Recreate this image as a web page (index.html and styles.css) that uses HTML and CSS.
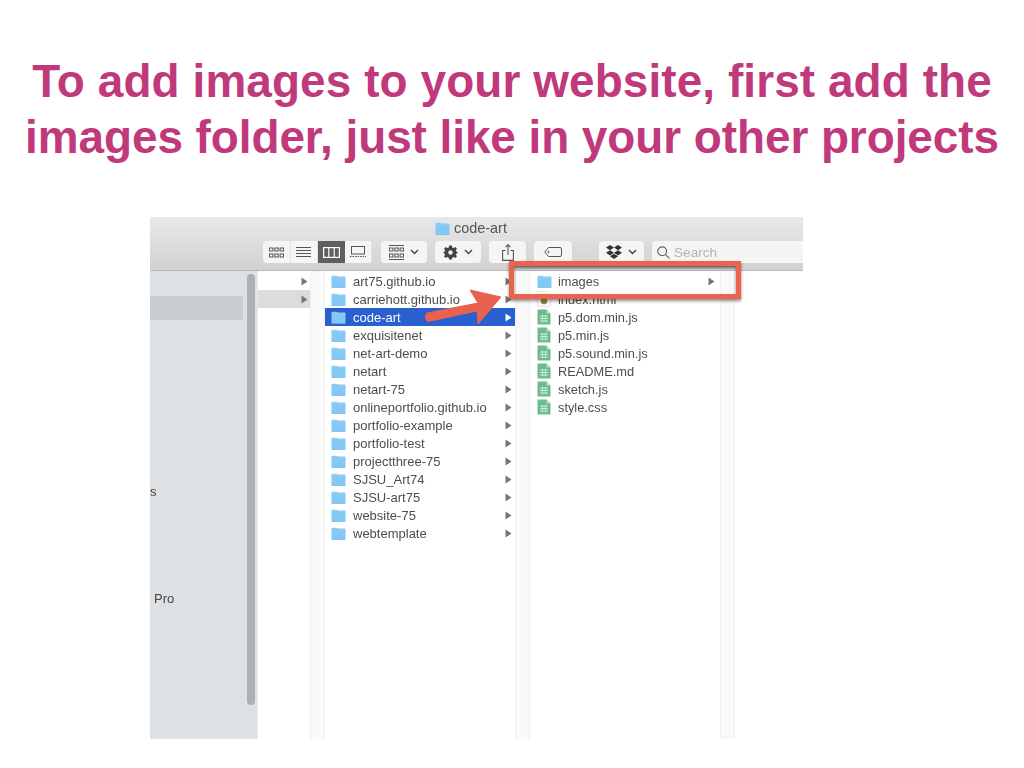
FILE: index.html

```html
<!DOCTYPE html>
<html lang="en">
<head>
  <meta charset="UTF-8" />
  <title>Add images folder</title>
  <link rel="stylesheet" href="styles.css">
</head>
<body>
  <svg class="defs" width="0" height="0">
    <symbol id="folder" viewBox="0 0 15 13">
      <path d="M0.5 2 Q0.5 0.7 2 0.7 H5.5 L6.5 1.6 H13.5 Q14.5 1.6 14.5 2.6 V11.5 Q14.5 12.5 13.5 12.5 H1.5 Q0.5 12.5 0.5 11.5 Z" fill="#84c8f6"/>
      <path d="M0.5 2.6 H14.5 V3.3 H0.5 Z" fill="#9bd3f8"/>
      <path d="M0.5 12 H14.5 V12.7 H0.5 Z" fill="#69b2e4"/>
    </symbol>
    <symbol id="jsfile" viewBox="0 0 14 16">
      <path d="M0.5 0.5 H9.5 L13.5 4.5 V15.5 H0.5 Z" fill="#6dbb8a"/>
      <path d="M9.5 0.5 L13.5 4.5 H9.5 Z" fill="#b7e0c5"/>
      <path d="M3 7 H11 M3 9.5 H11 M3 12 H11" stroke="#d8f0e0" stroke-width="0.9"/>
      <path d="M5.5 6 V13.5 M8.5 6 V13.5" stroke="#d8f0e0" stroke-width="0.7"/>
    </symbol>
    <symbol id="docfile" viewBox="0 0 14 16">
      <path d="M0.5 0.5 H9.5 L13.5 4.5 V15.5 H0.5 Z" fill="#fafafa" stroke="#ccc" stroke-width="0.5"/>
      <circle cx="7" cy="10" r="3.2" fill="#7b8a3a"/>
      <path d="M4 10 A3 3 0 0 1 10 10 Z" fill="#d9772c"/>
    </symbol>
    <symbol id="tri" viewBox="0 0 7 9">
      <path d="M0.5 0.5 L6.5 4.5 L0.5 8.5 Z"/>
    </symbol>
    <symbol id="chev" viewBox="0 0 9 6">
      <path d="M1 1 L4.5 4.5 L8 1" fill="none" stroke="#444" stroke-width="1.4"/>
    </symbol>
  </svg>

  <h1 class="headline"><span class="line-first">To add images to your website, first add the</span><br><span class="line-second">images folder, just like in your other projects</span></h1>

  <div class="finder">
    <div class="chrome">
      <div class="titlebar">
        <svg class="title-icon"><use href="#folder"/></svg>
        <span>code-art</span>
      </div>
      <div class="toolbar">
        <div class="btn-group">
          <div class="seg">
            <svg width="15" height="11" viewBox="0 0 15 11" fill="none" stroke="#555"><rect x="0.5" y="1" width="3.4" height="3"/><rect x="5.8" y="1" width="3.4" height="3"/><rect x="11.1" y="1" width="3.4" height="3"/><rect x="0.5" y="7" width="3.4" height="3"/><rect x="5.8" y="7" width="3.4" height="3"/><rect x="11.1" y="7" width="3.4" height="3"/></svg>
          </div>
          <div class="seg">
            <svg width="15" height="11" viewBox="0 0 15 11" stroke="#555"><path d="M0 0.5 H15 M0 3.5 H15 M0 6.5 H15 M0 9.5 H15"/></svg>
          </div>
          <div class="seg seg-on">
            <svg width="17" height="11" viewBox="0 0 17 11" fill="none" stroke="#fff" stroke-width="1.2"><rect x="0.6" y="0.6" width="15.8" height="9.8"/><path d="M5.8 0.6 V10.4 M11.2 0.6 V10.4"/></svg>
          </div>
          <div class="seg">
            <svg width="16" height="12" viewBox="0 0 16 12" fill="none" stroke="#555"><rect x="1.5" y="0.5" width="13" height="7.5"/><path d="M0 10.5 H16" stroke-dasharray="1.5 1"/></svg>
          </div>
        </div>
        <div class="btn btn-arrange">
          <svg width="15" height="15" viewBox="0 0 15 15" fill="none" stroke="#555"><path d="M0 0.5 H15 M0 14.5 H15"/><rect x="0.5" y="3" width="3.4" height="3"/><rect x="5.8" y="3" width="3.4" height="3"/><rect x="11.1" y="3" width="3.4" height="3"/><rect x="0.5" y="9" width="3.4" height="3"/><rect x="5.8" y="9" width="3.4" height="3"/><rect x="11.1" y="9" width="3.4" height="3"/></svg>
          <svg class="chev"><use href="#chev"/></svg>
        </div>
        <div class="btn btn-action">
          <svg width="15" height="15" viewBox="0 0 15 15"><path d="M6.2 0.5 H8.8 L9.2 2.4 L10.9 3.1 L12.5 2 L14 3.8 L12.8 5.3 L13.4 6.4 L15 7.5 L13.4 8.7 L12.8 9.8 L14 11.3 L12.5 13 L10.9 12 L9.2 12.7 L8.8 14.5 H6.2 L5.8 12.7 L4.1 12 L2.5 13 L1 11.3 L2.2 9.8 L1.6 8.7 L0 7.5 L1.6 6.4 L2.2 5.3 L1 3.8 L2.5 2 L4.1 3.1 L5.8 2.4 Z" fill="#444"/><circle cx="7.5" cy="7.5" r="2.2" fill="#f2f2f2"/></svg>
          <svg class="chev"><use href="#chev"/></svg>
        </div>
        <div class="btn btn-share">
          <svg width="12" height="17" viewBox="0 0 12 17" fill="none" stroke="#555" stroke-width="1.1"><path d="M3.5 6.5 H0.6 V16.4 H11.4 V6.5 H8.5"/><path d="M6 11 V0.8 M3.4 3.2 L6 0.8 L8.6 3.2"/></svg>
        </div>
        <div class="btn btn-tag">
          <svg width="18" height="10" viewBox="0 0 18 10" fill="none" stroke="#555"><path d="M4.5 0.5 H16 Q17.5 0.5 17.5 2 V8 Q17.5 9.5 16 9.5 H4.5 L0.7 5 Z"/><circle cx="4.5" cy="5" r="0.7"/></svg>
        </div>
        <div class="btn btn-dropbox">
          <svg width="16" height="15" viewBox="0 0 16 15" fill="#333"><path d="M4 0 L8 2.6 L4 5.2 L0 2.6 Z M12 0 L16 2.6 L12 5.2 L8 2.6 Z M4 5.2 L8 7.8 L4 10.4 L0 7.8 Z M12 5.2 L16 7.8 L12 10.4 L8 7.8 Z M4 11.3 L8 8.8 L12 11.3 L8 14 Z"/></svg>
          <svg class="chev"><use href="#chev"/></svg>
        </div>
        <div class="search">
          <svg width="13" height="13" viewBox="0 0 13 13" fill="none" stroke="#666" stroke-width="1.2"><circle cx="5.2" cy="5.2" r="4.4"/><path d="M8.4 8.4 L12.4 12.4"/></svg>
          <span>Search</span>
        </div>
      </div>
    </div>

    <div class="browser">
      <aside class="sidebar">
        <div class="side-selected"></div>
        <div class="side-label side-s">s</div>
        <div class="side-label side-pro">Pro</div>
        <div class="scrollbar"></div>
      </aside>

      <div class="col col-parent">
        <div class="stub"><svg class="tri"><use href="#tri"/></svg></div>
        <div class="stub stub-on"><svg class="tri"><use href="#tri"/></svg></div>
      </div>
      <div class="gutter"></div>

      <div class="col col-list">
        <div class="row"><svg class="ico"><use href="#folder"/></svg><span>art75.github.io</span><svg class="tri"><use href="#tri"/></svg></div>
        <div class="row"><svg class="ico"><use href="#folder"/></svg><span>carriehott.github.io</span><svg class="tri"><use href="#tri"/></svg></div>
        <div class="row row-on"><svg class="ico"><use href="#folder"/></svg><span>code-art</span><svg class="tri"><use href="#tri"/></svg></div>
        <div class="row"><svg class="ico"><use href="#folder"/></svg><span>exquisitenet</span><svg class="tri"><use href="#tri"/></svg></div>
        <div class="row"><svg class="ico"><use href="#folder"/></svg><span>net-art-demo</span><svg class="tri"><use href="#tri"/></svg></div>
        <div class="row"><svg class="ico"><use href="#folder"/></svg><span>netart</span><svg class="tri"><use href="#tri"/></svg></div>
        <div class="row"><svg class="ico"><use href="#folder"/></svg><span>netart-75</span><svg class="tri"><use href="#tri"/></svg></div>
        <div class="row"><svg class="ico"><use href="#folder"/></svg><span>onlineportfolio.github.io</span><svg class="tri"><use href="#tri"/></svg></div>
        <div class="row"><svg class="ico"><use href="#folder"/></svg><span>portfolio-example</span><svg class="tri"><use href="#tri"/></svg></div>
        <div class="row"><svg class="ico"><use href="#folder"/></svg><span>portfolio-test</span><svg class="tri"><use href="#tri"/></svg></div>
        <div class="row"><svg class="ico"><use href="#folder"/></svg><span>projectthree-75</span><svg class="tri"><use href="#tri"/></svg></div>
        <div class="row"><svg class="ico"><use href="#folder"/></svg><span>SJSU_Art74</span><svg class="tri"><use href="#tri"/></svg></div>
        <div class="row"><svg class="ico"><use href="#folder"/></svg><span>SJSU-art75</span><svg class="tri"><use href="#tri"/></svg></div>
        <div class="row"><svg class="ico"><use href="#folder"/></svg><span>website-75</span><svg class="tri"><use href="#tri"/></svg></div>
        <div class="row"><svg class="ico"><use href="#folder"/></svg><span>webtemplate</span><svg class="tri"><use href="#tri"/></svg></div>
      </div>
      <div class="gutter"></div>

      <div class="col col-list col-files">
        <div class="row"><svg class="ico"><use href="#folder"/></svg><span>images</span><svg class="tri"><use href="#tri"/></svg></div>
        <div class="row"><svg class="ico ico-file"><use href="#docfile"/></svg><span>index.html</span></div>
        <div class="row"><svg class="ico ico-file"><use href="#jsfile"/></svg><span>p5.dom.min.js</span></div>
        <div class="row"><svg class="ico ico-file"><use href="#jsfile"/></svg><span>p5.min.js</span></div>
        <div class="row"><svg class="ico ico-file"><use href="#jsfile"/></svg><span>p5.sound.min.js</span></div>
        <div class="row"><svg class="ico ico-file"><use href="#jsfile"/></svg><span>README.md</span></div>
        <div class="row"><svg class="ico ico-file"><use href="#jsfile"/></svg><span>sketch.js</span></div>
        <div class="row"><svg class="ico ico-file"><use href="#jsfile"/></svg><span>style.css</span></div>
      </div>
      <div class="gutter"></div>
      <div class="col col-empty"></div>
    </div>

    <!-- callouts drawn on top of the screenshot -->
    <div class="callout-box"></div>
    <svg class="callout-arrow" width="90" height="45" viewBox="0 0 90 45">
      <path d="M5 31 L56 21 L48 8 L79 15 L56 42 L55 29 L6 39.5 Q1 36 5 31 Z" fill="#e9614f" stroke="#e9614f" stroke-width="1" stroke-linejoin="round"/>
    </svg>
  </div>
</body>
</html>
```

FILE: styles.css

```css
body {
  margin: 0;
  background: #fff;
  font-family: "Liberation Sans", Arial, sans-serif;
}
.defs {
  position: absolute;
}
.headline {
  margin: 0;
  padding-top: 53px;
  height: 217px;
  box-sizing: border-box;
  text-align: center;
  font-size: 45.9px;
  line-height: 56px;
  font-weight: bold;
  color: #c0397b;
  white-space: nowrap;
}
.line-first {
  letter-spacing: 0.1px;
}
.line-second {
  letter-spacing: -0.06px;
}

/* finder window */
.finder {
  position: relative;
  width: 653px;
  height: 522px;
  margin-left: 150px;
}
.chrome {
  height: 53px;
  overflow: hidden;
  background: linear-gradient(#e9e9e9, #d1d1d1);
  border-bottom: 1px solid #b9b9b9;
  filter: blur(0.35px);
}
.titlebar {
  display: flex;
  justify-content: center;
  align-items: center;
  gap: 4px;
  height: 22px;
  padding-right: 11px;
  font-size: 14.4px;
  color: #555;
}
.title-icon {
  width: 15px;
  height: 13px;
}
.toolbar {
  display: flex;
  align-items: flex-start;
  padding: 2px 0 0 113px;
}
.btn-group {
  display: flex;
  flex-shrink: 0;
  width: 109px;
  height: 22px;
  background: #f5f5f5;
  border-radius: 4px;
  overflow: hidden;
}
.seg {
  flex: 1;
  display: flex;
  align-items: center;
  justify-content: center;
  border-right: 1px solid #e2e2e2;
}
.seg-on {
  background: #5f5f5f;
  border-right: none;
}
.btn {
  display: flex;
  align-items: center;
  justify-content: center;
  gap: 6px;
  height: 22px;
  background: #f5f5f5;
  border-radius: 4px;
  flex-shrink: 0;
}
.chev {
  width: 9px;
  height: 6px;
}
.btn-arrange {
  width: 46px;
  margin-left: 9px;
}
.btn-action {
  width: 46px;
  margin-left: 8px;
}
.btn-share {
  width: 37px;
  margin-left: 8px;
}
.btn-tag {
  width: 38px;
  margin-left: 8px;
}
.btn-dropbox {
  width: 45px;
  margin-left: 27px;
}
.search {
  display: flex;
  align-items: center;
  gap: 4px;
  width: 151px;
  height: 22px;
  margin-left: 8px;
  padding-left: 5px;
  box-sizing: border-box;
  flex-shrink: 0;
  background: #f5f5f5;
  border-radius: 4px 0 0 4px;
  font-size: 13.6px;
  color: #b4b4b4;
}

/* columns */
.browser {
  display: flex;
  height: 468px;
  background: #fff;
  font-size: 13px;
  color: #4d4d4d;
  filter: blur(0.35px);
}
.sidebar {
  position: relative;
  width: 107px;
  flex-shrink: 0;
  background: #dde1e4;
  border-right: 1px solid #e9ebed;
  overflow: hidden;
}
.side-selected {
  position: absolute;
  left: 0;
  top: 25px;
  width: 93px;
  height: 24px;
  background: #c9cdd1;
}
.side-label {
  position: absolute;
  color: #444;
}
.side-s {
  left: 0;
  top: 213px;
}
.side-pro {
  left: 4px;
  top: 320px;
}
.scrollbar {
  position: absolute;
  left: 97px;
  top: 3px;
  width: 8px;
  height: 431px;
  border-radius: 4px;
  background: #adb1b3;
}
.col {
  padding-top: 1px;
  flex-shrink: 0;
}
.col-parent {
  width: 52px;
}
.col-list {
  width: 190px;
}
.col-empty {
  flex: 1;
}
.gutter {
  width: 13px;
  flex-shrink: 0;
  background: #f9f9f9;
  border-left: 1px solid #f0f0f0;
  border-right: 1px solid #f0f0f0;
}
.stub {
  display: flex;
  align-items: center;
  justify-content: flex-end;
  height: 18px;
  padding-right: 2px;
}
.stub-on {
  background: #dcdcdc;
}
.row {
  display: flex;
  align-items: center;
  height: 18px;
  padding: 0 3px 0 6px;
}
.row span {
  flex: 1;
  margin-left: 7px;
  white-space: nowrap;
}
.row-on {
  background: #2a5fd0;
  color: #fff;
}
.row-on .tri {
  fill: #fff;
}
.ico {
  width: 15px;
  height: 13px;
  flex-shrink: 0;
}
.ico-file {
  width: 14px;
  height: 16px;
}
.tri {
  width: 7px;
  height: 9px;
  fill: #777;
  flex-shrink: 0;
}
.col-files {
  font-size: 12.8px;
}
.col-files .tri {
  margin-right: 2px;
}
.col-files .row {
  padding-left: 7px;
}
.col-files .ico + span {
  margin-left: 6px;
}
.col-files .ico-file + span {
  margin-left: 7px;
}

/* callouts */
.callout-box {
  position: absolute;
  left: 359px;
  top: 44px;
  width: 222px;
  height: 28px;
  border: 5px solid #e9634f;
  box-shadow: 0 2px 3px rgba(0, 0, 0, 0.45), inset 0 2px 3px rgba(0, 0, 0, 0.55);
}
.callout-arrow {
  position: absolute;
  left: 272px;
  top: 65px;
}
```
